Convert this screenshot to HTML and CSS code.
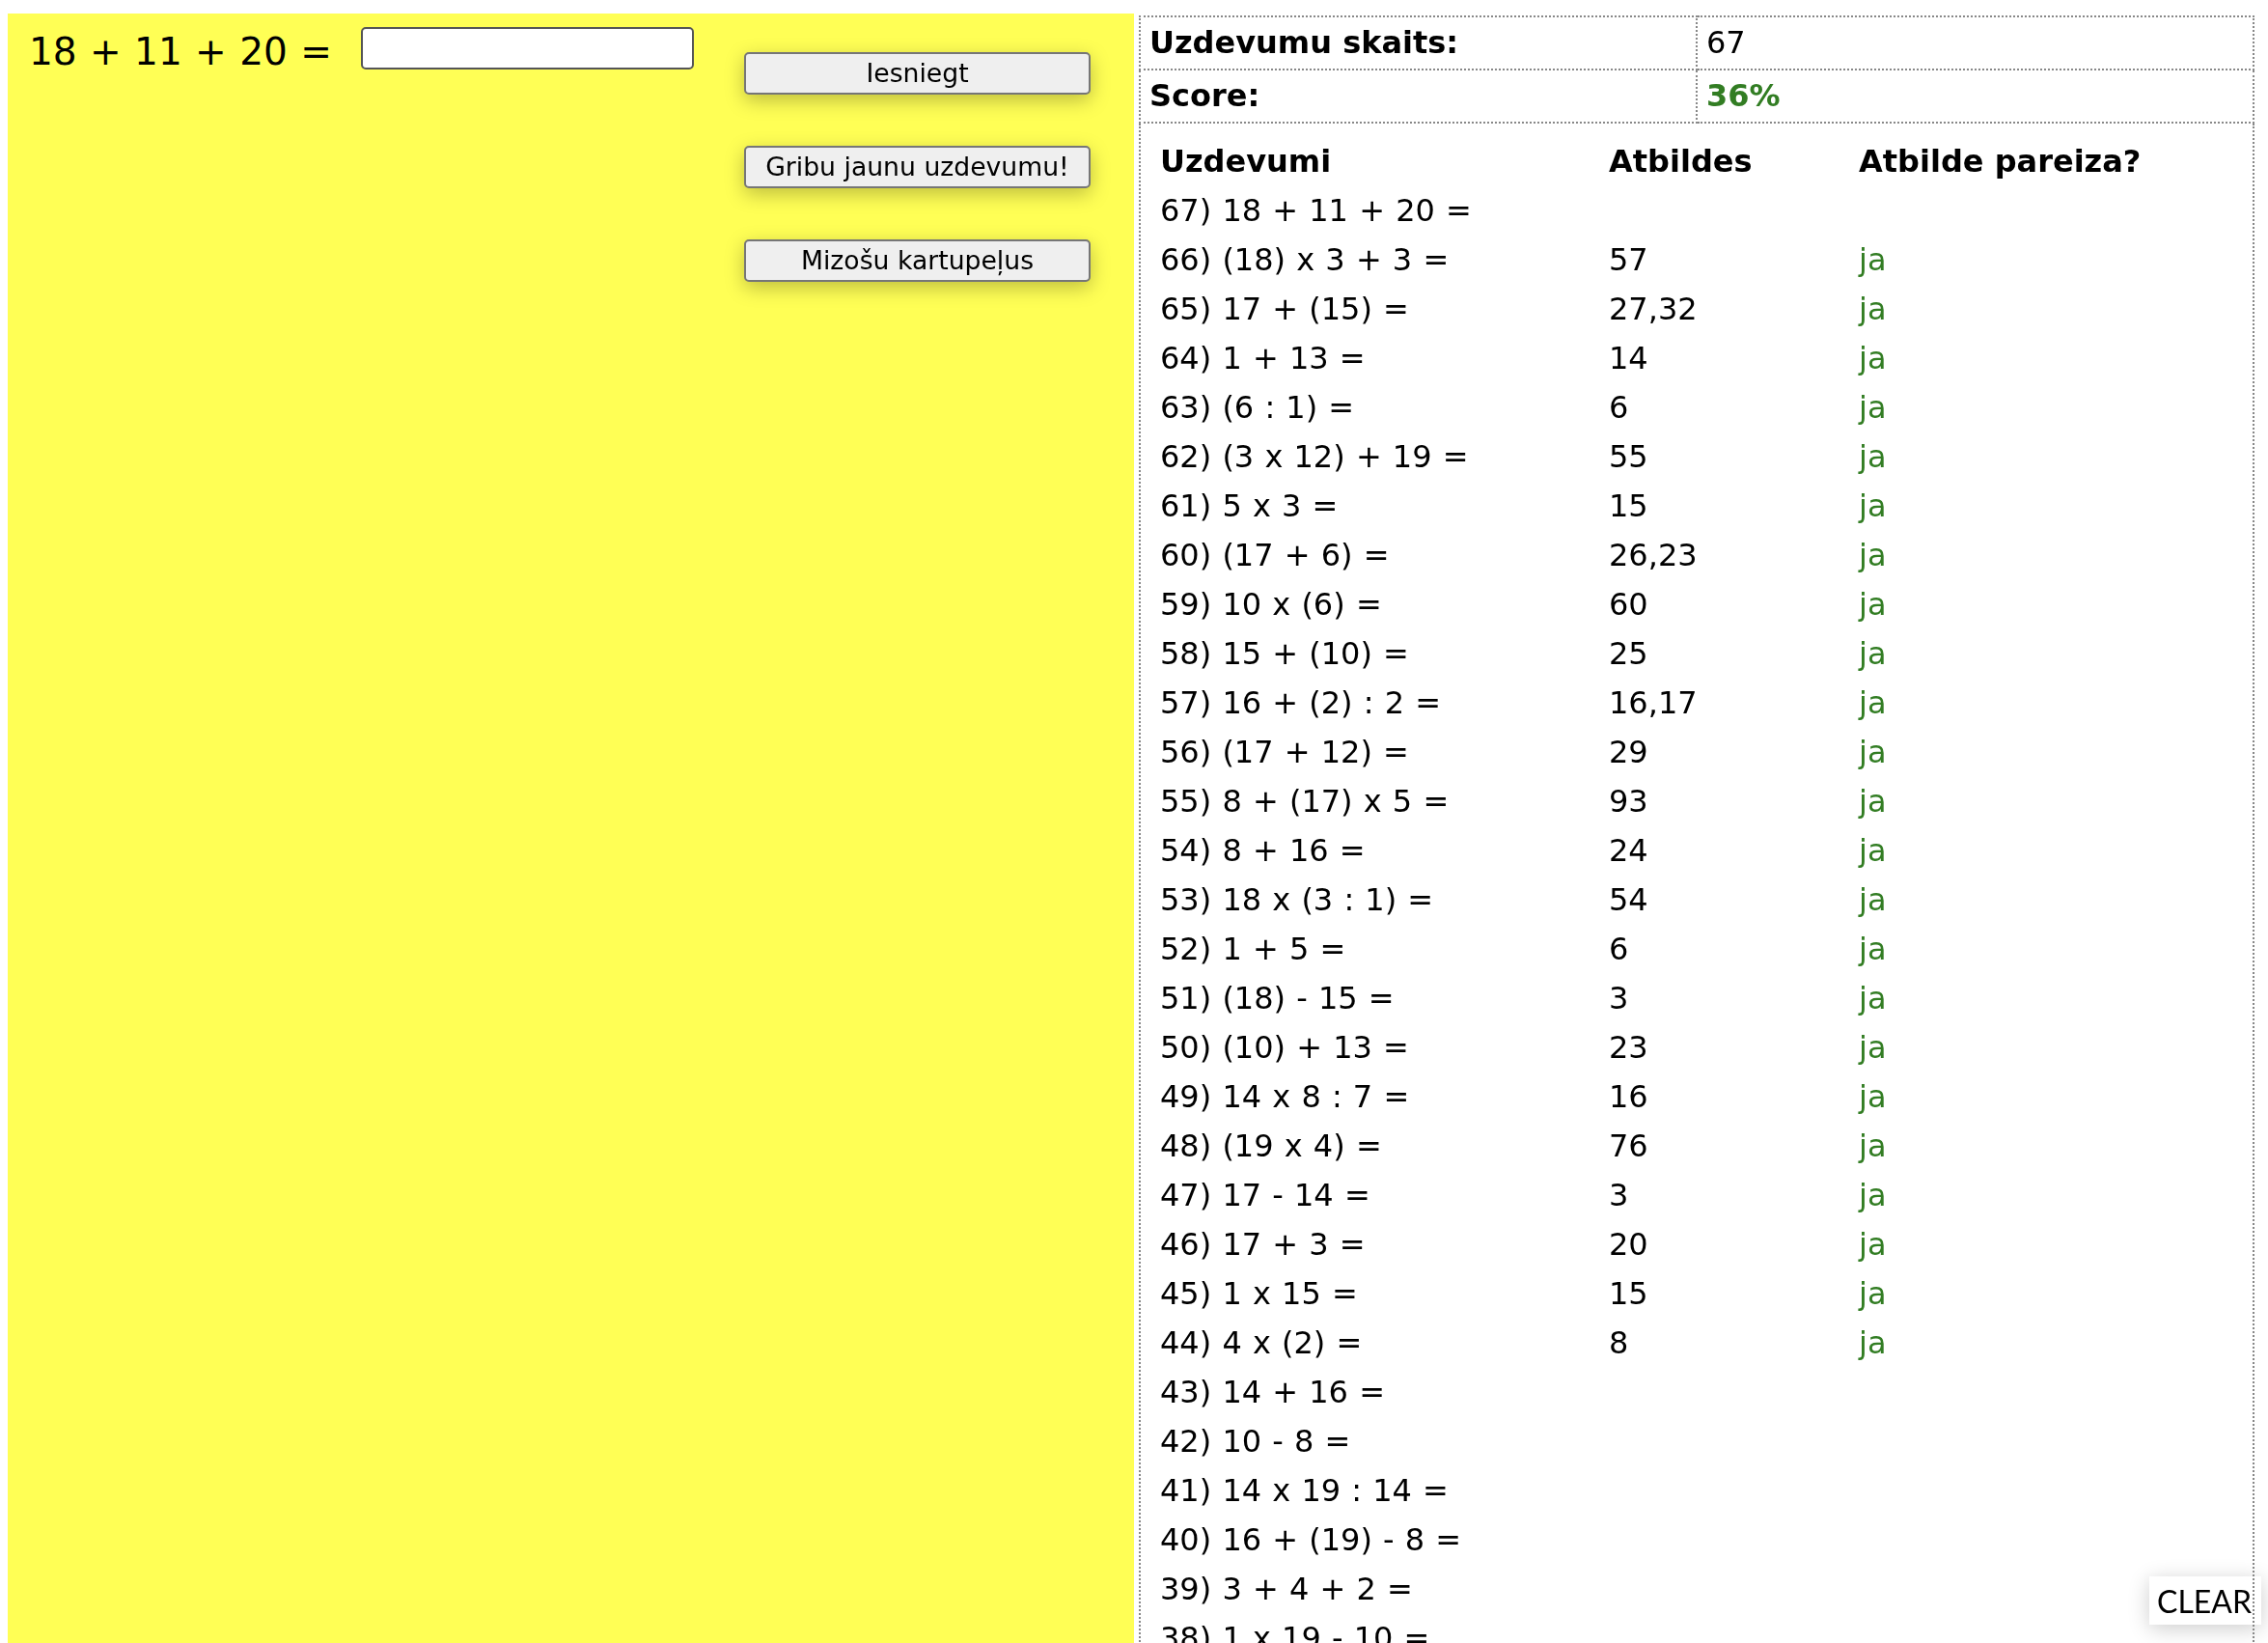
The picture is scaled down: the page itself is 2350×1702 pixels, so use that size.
FILE: index.html
```html
<!DOCTYPE html>
<html lang="lv">
<head>
<meta charset="utf-8">
<title>Uzdevumi</title>
<link rel="stylesheet" href="styles.css">
</head>
<body>
<div class="page">
  <div class="quiz">
    <div class="prompt">
      <span class="expr">18 + 11 + 20 =</span>
      <input class="answer" type="text">
    </div>
    <div class="actions">
      <button class="btn">Iesniegt</button>
      <button class="btn">Gribu jaunu uzdevumu!</button>
      <button class="btn">Mizošu kartupeļus</button>
    </div>
  </div>
  <div class="results">
    <table class="stats">
      <tr>
        <th class="key">Uzdevumu skaits:</th>
        <td class="val">67</td>
      </tr>
      <tr>
        <th class="key">Score:</th>
        <td class="val score">36%</td>
      </tr>
      <tr>
        <td class="list-cell" colspan="2">
          <table class="list">
            <colgroup><col class="c1"><col class="c2"><col class="c3"></colgroup>
            <tr><th>Uzdevumi</th><th>Atbildes</th><th>Atbilde pareiza?</th></tr>
            <tr><td>67) 18 + 11 + 20 =</td><td></td><td></td></tr>
            <tr><td>66) (18) x 3 + 3 =</td><td>57</td><td class="ok">ja</td></tr>
            <tr><td>65) 17 + (15) =</td><td>27,32</td><td class="ok">ja</td></tr>
            <tr><td>64) 1 + 13 =</td><td>14</td><td class="ok">ja</td></tr>
            <tr><td>63) (6 : 1) =</td><td>6</td><td class="ok">ja</td></tr>
            <tr><td>62) (3 x 12) + 19 =</td><td>55</td><td class="ok">ja</td></tr>
            <tr><td>61) 5 x 3 =</td><td>15</td><td class="ok">ja</td></tr>
            <tr><td>60) (17 + 6) =</td><td>26,23</td><td class="ok">ja</td></tr>
            <tr><td>59) 10 x (6) =</td><td>60</td><td class="ok">ja</td></tr>
            <tr><td>58) 15 + (10) =</td><td>25</td><td class="ok">ja</td></tr>
            <tr><td>57) 16 + (2) : 2 =</td><td>16,17</td><td class="ok">ja</td></tr>
            <tr><td>56) (17 + 12) =</td><td>29</td><td class="ok">ja</td></tr>
            <tr><td>55) 8 + (17) x 5 =</td><td>93</td><td class="ok">ja</td></tr>
            <tr><td>54) 8 + 16 =</td><td>24</td><td class="ok">ja</td></tr>
            <tr><td>53) 18 x (3 : 1) =</td><td>54</td><td class="ok">ja</td></tr>
            <tr><td>52) 1 + 5 =</td><td>6</td><td class="ok">ja</td></tr>
            <tr><td>51) (18) - 15 =</td><td>3</td><td class="ok">ja</td></tr>
            <tr><td>50) (10) + 13 =</td><td>23</td><td class="ok">ja</td></tr>
            <tr><td>49) 14 x 8 : 7 =</td><td>16</td><td class="ok">ja</td></tr>
            <tr><td>48) (19 x 4) =</td><td>76</td><td class="ok">ja</td></tr>
            <tr><td>47) 17 - 14 =</td><td>3</td><td class="ok">ja</td></tr>
            <tr><td>46) 17 + 3 =</td><td>20</td><td class="ok">ja</td></tr>
            <tr><td>45) 1 x 15 =</td><td>15</td><td class="ok">ja</td></tr>
            <tr><td>44) 4 x (2) =</td><td>8</td><td class="ok">ja</td></tr>
            <tr><td>43) 14 + 16 =</td><td></td><td></td></tr>
            <tr><td>42) 10 - 8 =</td><td></td><td></td></tr>
            <tr><td>41) 14 x 19 : 14 =</td><td></td><td></td></tr>
            <tr><td>40) 16 + (19) - 8 =</td><td></td><td></td></tr>
            <tr><td>39) 3 + 4 + 2 =</td><td></td><td></td></tr>
            <tr><td>38) 1 x 19 - 10 =</td><td></td><td></td></tr>
          </table>
        </td>
      </tr>
    </table>
  </div>
</div>
<button class="clear">CLEAR</button>
</body>
</html>
```

FILE: styles.css
```css
html {
  background: #ffffff;
}

body {
  margin: 0;
  font-family: "DejaVu Sans", Verdana, sans-serif;
  color: #000;
}

.page {
  display: flex;
  align-items: stretch;
  padding: 14px 0 0 8px;
}

.quiz {
  width: 1167px;
  flex: none;
  box-sizing: border-box;
  background: #ffff55;
  display: flex;
  align-items: flex-start;
  padding: 14px 0 0 22px;
}

.prompt {
  width: 741px;
  flex: none;
  display: flex;
  align-items: flex-start;
}

.expr {
  font-size: 39px;
  line-height: 44px;
  margin-top: 4px;
  margin-right: 30px;
  word-spacing: 1px;
  white-space: nowrap;
}

.answer {
  width: 345px;
  height: 44px;
  box-sizing: border-box;
  border: 2px solid #555555;
  border-radius: 5px;
  background: #ffffff;
  margin: 0;
}

.actions {
  display: flex;
  flex-direction: column;
  gap: 53px;
  margin-top: 26px;
}

.btn {
  width: 359px;
  height: 44px;
  box-sizing: border-box;
  margin: 0;
  padding: 0;
  border: 2px solid #767676;
  border-radius: 5px;
  background: #efefef;
  color: #000;
  font-family: "DejaVu Sans", Verdana, sans-serif;
  font-size: 26.67px;
  line-height: 38px;
  box-shadow: 0 6px 20px rgba(0, 0, 0, 0.26);
}

.results {
  width: 1156px;
  flex: none;
  margin-left: 5px;
  padding-top: 2px;
}

.stats {
  width: 100%;
  border-collapse: collapse;
  border: 2px dotted #888888;
  font-size: 32px;
}

.key,
.val {
  border: 2px dotted #888888;
  width: 50%;
  line-height: 53px;
  padding: 0 8px 0 9px;
  text-align: left;
  vertical-align: middle;
  white-space: nowrap;
}

.key {
  font-weight: bold;
}

.val {
  font-weight: normal;
}

.score {
  color: #327d23;
  font-weight: bold;
}

.list-cell {
  border: 2px dotted #888888;
  padding: 14px 0 0 10px;
  vertical-align: top;
}

.list {
  border-collapse: collapse;
  width: 100%;
  font-size: 32px;
}

.list .c1 { width: 465px; }
.list .c2 { width: 259px; }

.list th,
.list td {
  padding: 0 0 0 10px;
  line-height: 51px;
  text-align: left;
  white-space: nowrap;
}

.list td {
  word-spacing: 1px;
}

.list th {
  font-weight: bold;
}

.list .ok {
  color: #327d23;
}

.clear {
  position: fixed;
  right: 7px;
  bottom: 19px;
  z-index: -1;
  width: 116px;
  height: 50px;
  box-sizing: border-box;
  margin: 0;
  padding: 0 0 0 8px;
  border: none;
  background: #ffffff;
  color: #000;
  font-family: Lato, "Open Sans", sans-serif;
  font-size: 32px;
  text-align: left;
  white-space: nowrap;
  box-shadow: 0 4px 22px rgba(0, 0, 0, 0.2);
}
```
